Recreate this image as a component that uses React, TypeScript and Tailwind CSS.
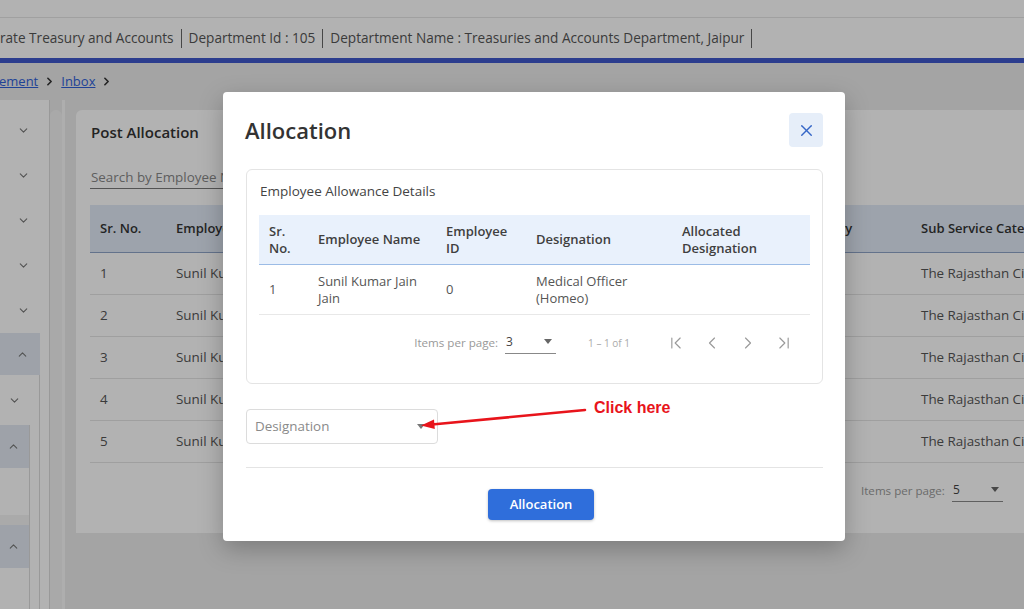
import { ChevronDown, ChevronUp, X, ChevronFirst, ChevronLast, ChevronLeft, ChevronRight } from "lucide-react";

export default function App() {
  const rows = [1, 2, 3, 4, 5];
  return (
    <div className="relative w-[1024px] h-[609px] overflow-hidden bg-[#ebebeb] font-['Open_Sans',sans-serif] text-[#444]">
      {/* Top header */}
      <div className="h-[18px] bg-white border-b border-[#e6e6e6]" />
      <div className="h-[40px] bg-white flex items-center text-[13.6px] text-[#555] whitespace-nowrap">
        <span>rate Treasury and Accounts</span>
        <span className="mx-[7px] h-[19px] w-px bg-[#666]" />
        <span>Department Id : 105</span>
        <span className="mx-[7px] h-[19px] w-px bg-[#666]" />
        <span>Deptartment Name : Treasuries and Accounts Department, Jaipur</span>
        <span className="mx-[7px] h-[19px] w-px bg-[#666]" />
      </div>
      <div className="h-[5px] bg-[#3f58cc]" />
      {/* Breadcrumb */}
      <div className="h-[37px] flex items-center text-[13px] text-[#2f5fd8]">
        <span className="underline -ml-px">ement</span>
        <ChevronRight className="mx-[5px] text-[#333]" size={13} strokeWidth={3} />
        <span className="underline">Inbox</span>
        <ChevronRight className="ml-[5px] text-[#333]" size={13} strokeWidth={3} />
      </div>
      {/* Body */}
      <div className="flex h-[509px]">
        {/* Sidebar */}
        <div className="w-[50px] shrink-0 bg-white border-r border-[#dcdcdc] pt-[8px] flex flex-col">
          {[0, 1, 2, 3, 4].map((i) => (
            <div key={i} className="h-[45px] flex items-center pl-[17px] text-[#777]">
              <ChevronDown size={13} strokeWidth={2} />
            </div>
          ))}
          <div className="w-[40px] h-[42px] bg-[#e2e9f3] flex items-center pl-[16px] text-[#777]">
            <ChevronUp size={13} strokeWidth={2} />
          </div>
          <div className="w-[40px] flex-1 border-r border-[#dcdcdc] flex flex-col">
            <div className="h-[50px] flex items-center pl-[8px] text-[#777]">
              <ChevronDown size={13} strokeWidth={2} />
            </div>
            <div className="w-[30px] border-r border-[#dcdcdc] flex-1 flex flex-col">
              <div className="h-[43px] bg-[#e2e9f3] flex items-center pl-[7px] text-[#777]">
                <ChevronUp size={13} strokeWidth={2} />
              </div>
              <div className="h-[47px] bg-white" />
              <div className="h-[10px] bg-[#f4f4f4]" />
              <div className="h-[43px] bg-[#e2e9f3] flex items-center pl-[7px] text-[#777]">
                <ChevronUp size={13} strokeWidth={2} />
              </div>
              <div className="flex-1 bg-white" />
            </div>
          </div>
        </div>
        <div className="w-[12px] shrink-0 bg-[#f3f3f3] mt-[10px] rounded-t-md" />
        <div className="w-[3px] shrink-0 bg-[#fafafa]" />
        {/* Main */}
        <div className="flex-1 min-w-0">
          <div className="ml-[11px] mt-[10px] w-[1250px] h-[423px] bg-white rounded-t-md px-[14px] pt-[12px]">
            <div className="pl-px text-[15px] leading-[20px] font-semibold text-[#333]">Post Allocation</div>
            <div className="mt-[25px] w-[300px] border-b border-[#777] pl-px text-[13.4px] leading-[20px] text-[#888] pb-px">Search by Employee Name</div>
            <div className="mt-[16px]">
              <div className="grid grid-cols-[76px_572px_173px_420px] h-[48px] items-center bg-[#e1eaf7] border-b border-[#8fa4c8] text-[13px] font-semibold text-[#333]">
                <div className="pl-[10px]">Sr. No.</div>
                <div className="pl-[10px]">Employee Name</div>
                <div className="pl-[10px]">Service Category</div>
                <div className="pl-[10px]">Sub Service Category</div>
              </div>
              {rows.map((r) => (
                <div key={r} className="grid grid-cols-[76px_572px_173px_420px] h-[42px] items-center border-b border-[#e4e4e4] text-[13.4px] text-[#555] whitespace-nowrap">
                  <div className="pl-[10px]">{r}</div>
                  <div className="pl-[10px]">Sunil Kumar Jain Jain</div>
                  <div className="pl-[10px]">Medical</div>
                  <div className="pl-[10px] overflow-hidden">The Rajasthan Civil Services (Medical)</div>
                </div>
              ))}
              <div className="h-[56px] flex items-center pl-[771px] text-[11.6px] text-[#999]">
                <span>Items per page:</span>
                <div className="ml-[7px] w-[51px] border-b border-[#888] flex items-center justify-between pb-[2px] text-[12px] text-[#444]">
                  <span className="pl-px">5</span>
                  <span className="mr-[4px] w-0 h-0 border-l-[4px] border-r-[4px] border-t-[5px] border-l-transparent border-r-transparent border-t-[#666]" />
                </div>
              </div>
            </div>
          </div>
        </div>
      </div>

      {/* Overlay */}
      <div className="absolute inset-0 bg-black/30" />

      {/* Modal */}
      <div className="absolute left-[223px] top-[92px] w-[622px] h-[449px] bg-white rounded-[4px] shadow-[0_8px_24px_rgba(0,0,0,0.25)] pl-[23px] pr-[22px] pt-[21px]">
        <div className="h-[34px] flex items-center justify-between">
          <div className="text-[22px] font-semibold text-[#333] -ml-px">Allocation</div>
          <div className="w-[34px] h-[34px] rounded-[4px] bg-[#e6eef9] flex items-center justify-center text-[#3566c7]">
            <X size={19} strokeWidth={1.8} />
          </div>
        </div>
        <div className="mt-[22px] border border-[#e4e4e4] rounded-[6px] px-[12px] pt-[11px] pb-[12px]">
          <div className="pl-px text-[13.5px] leading-[20px] text-[#444]">Employee Allowance Details</div>
          <div className="mt-[14px]">
            <div className="grid grid-cols-[49px_128px_90px_146px_137px] h-[50px] items-center bg-[#e9f1fc] border-b border-[#9cbce6] text-[13px] leading-[17px] font-semibold text-[#3f3f3f]">
              <div className="pl-[10px]">Sr.<br />No.</div>
              <div className="pl-[10px]">Employee Name</div>
              <div className="pl-[10px]">Employee<br />ID</div>
              <div className="pl-[10px]">Designation</div>
              <div className="pl-[10px]">Allocated<br />Designation</div>
            </div>
            <div className="grid grid-cols-[49px_128px_90px_146px_137px] h-[50px] items-center border-b border-[#e8e8e8] text-[13px] leading-[17px] text-[#555]">
              <div className="pl-[10px]">1</div>
              <div className="pl-[10px]">Sunil Kumar Jain<br />Jain</div>
              <div className="pl-[10px]">0</div>
              <div className="pl-[10px]">Medical Officer<br />(Homeo)</div>
              <div className="pl-[10px]"></div>
            </div>
            <div className="h-[56px] flex items-center justify-end pr-[8px] text-[11.6px] text-[#999]">
              <span>Items per page:</span>
              <div className="ml-[7px] w-[51px] border-b border-[#888] flex items-center justify-between pb-[2px] text-[12px] text-[#444]">
                <span className="pl-px">3</span>
                <span className="mr-[4px] w-0 h-0 border-l-[4px] border-r-[4px] border-t-[5px] border-l-transparent border-r-transparent border-t-[#666]" />
              </div>
              <span className="ml-[32px] mr-[28px] text-[10px] text-[#aaa]">1 – 1 of 1</span>
              <div className="flex text-[#9a9a9a]">
                <div className="w-[36px] flex justify-center"><ChevronFirst size={20} strokeWidth={1.4} /></div>
                <div className="w-[36px] flex justify-center"><ChevronLeft size={20} strokeWidth={1.4} /></div>
                <div className="w-[36px] flex justify-center"><ChevronRight size={20} strokeWidth={1.4} /></div>
                <div className="w-[36px] flex justify-center"><ChevronLast size={20} strokeWidth={1.4} /></div>
              </div>
            </div>
          </div>
        </div>
        <div className="mt-[25px] w-[192px] h-[35px] border border-[#dcdcdc] rounded-[4px] flex items-center justify-between pl-[8px] pr-[12px]">
          <span className="text-[13.4px] text-[#8a8a8a]">Designation</span>
          <span className="w-0 h-0 border-l-[4px] border-r-[4px] border-t-[5px] border-l-transparent border-r-transparent border-t-[#777]" />
        </div>
        <div className="mt-[23px] border-t border-[#e4e4e4]" />
        <div className="mt-[21px] flex justify-center pl-[13px]">
          <div className="w-[106px] h-[31px] rounded-[4px] bg-[#2f6edb] shadow-[0_1px_3px_rgba(0,0,0,0.25)] flex items-center justify-center text-white text-[13px] font-semibold">
            Allocation
          </div>
        </div>
      </div>

      {/* Annotation */}
      <svg className="absolute inset-0 pointer-events-none" width="1024" height="609">
        <line x1="585" y1="410" x2="432" y2="424.5" stroke="#e8141b" strokeWidth="2.6" strokeLinecap="round" />
        <polygon points="421,425.5 434,419.5 434.8,429" fill="#e8141b" />
      </svg>
      <div className="absolute left-[594px] top-[397px] text-[16px] leading-[22px] font-bold text-[#e8141b] font-['Liberation_Sans',sans-serif]">
        Click here
      </div>
    </div>
  );
}
